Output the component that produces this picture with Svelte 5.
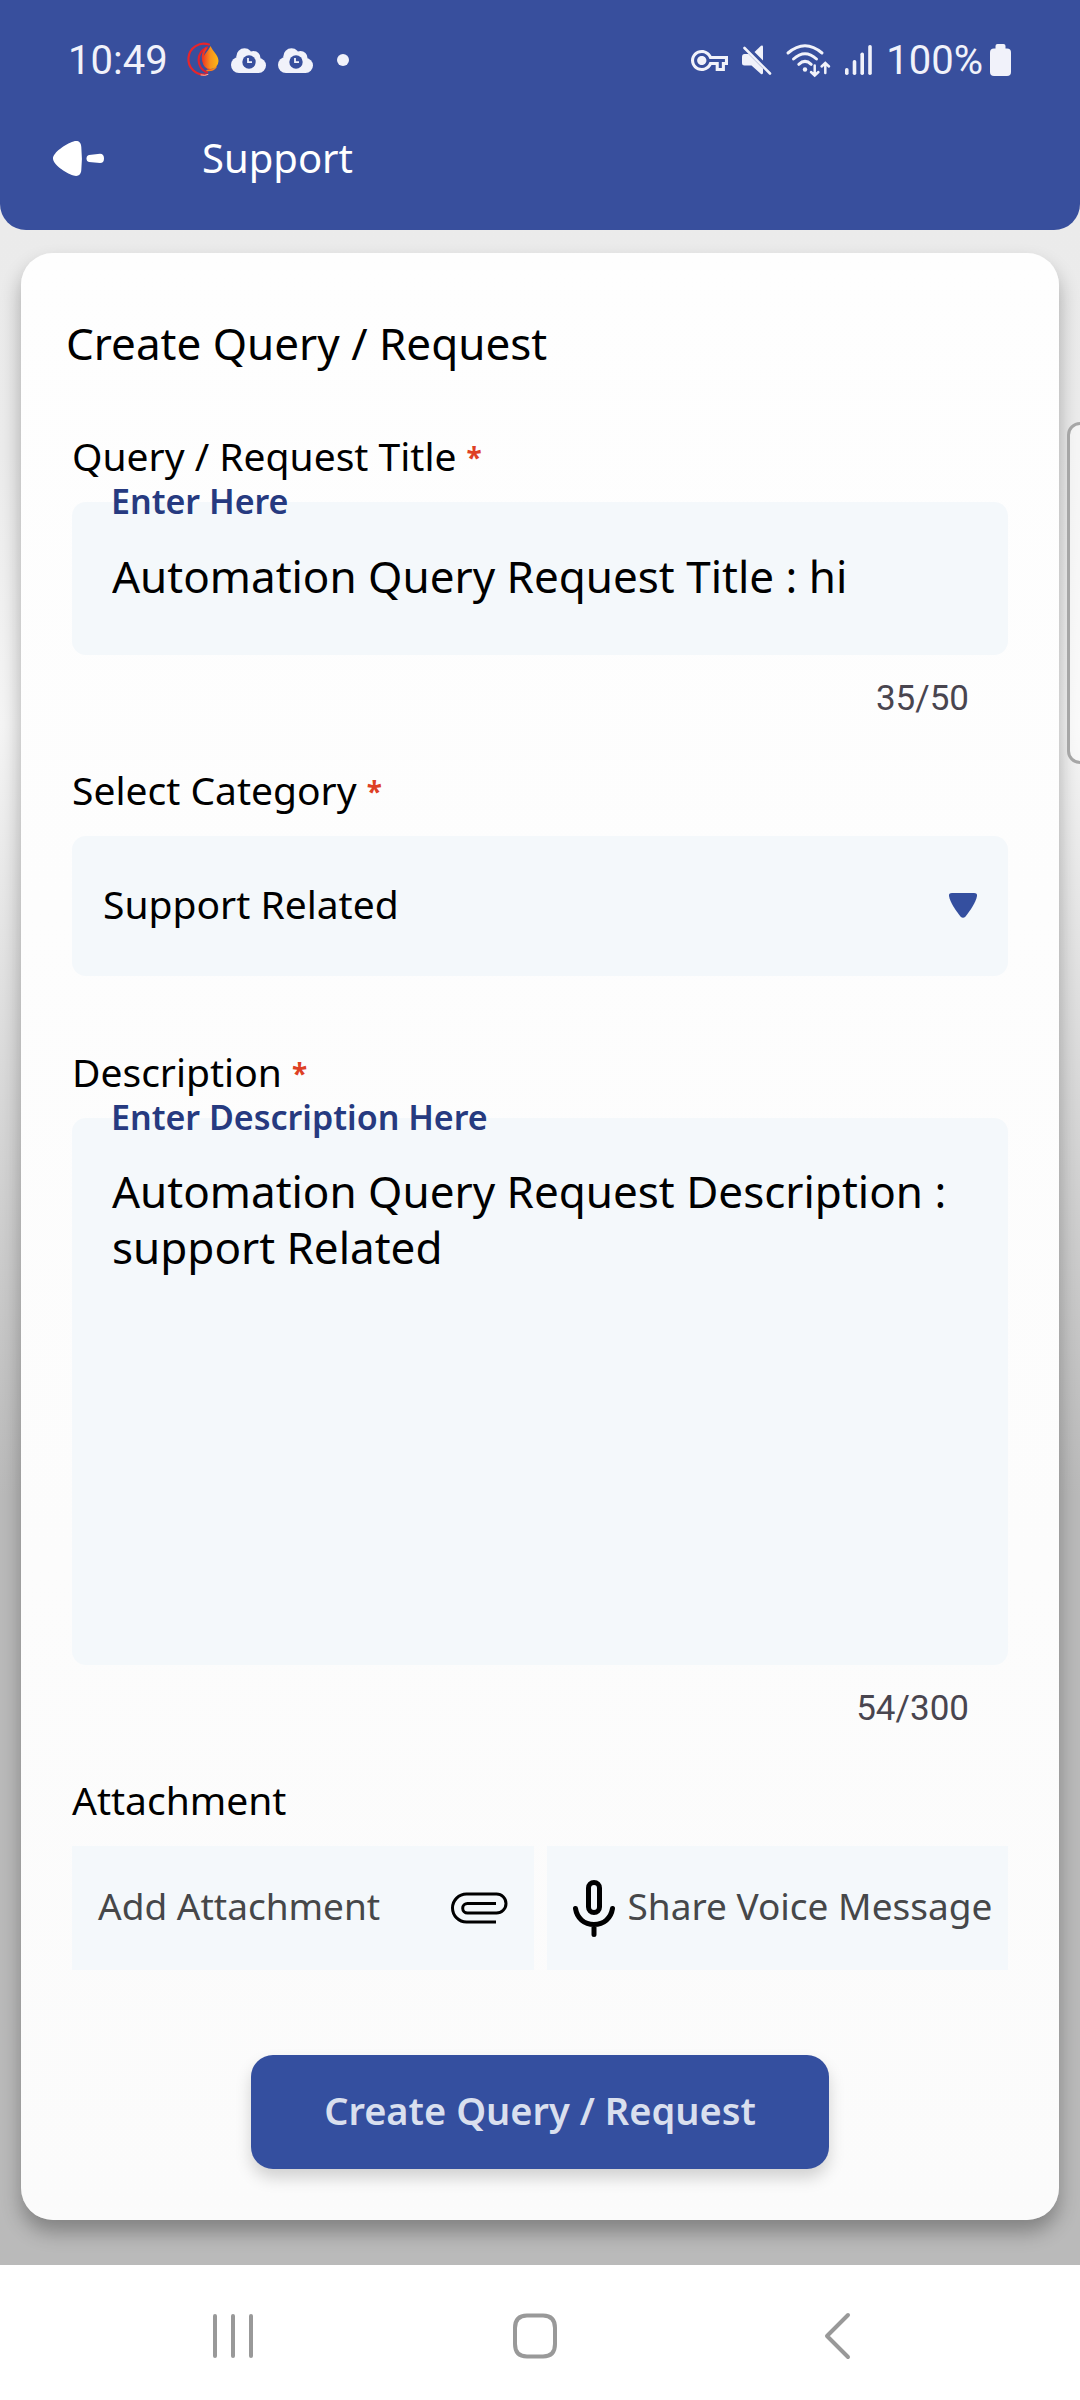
<script>
  let title = $state('Automation Query Request Title : hi');
  let category = $state('Support Related');
  let description = $state('Automation Query Request Description : support Related');
</script>

{#snippet cloud()}
  <svg class="cloud" width="35" height="25" viewBox="0 0 35 25" aria-hidden="true">
    <g fill="#f1f2fa">
      <circle cx="8" cy="17" r="8" />
      <circle cx="13.5" cy="8.5" r="8.2" />
      <circle cx="22.5" cy="10" r="7" />
      <circle cx="27.5" cy="17.5" r="7.5" />
      <rect x="8" y="13" width="20" height="12" />
    </g>
    <circle cx="18" cy="14" r="6.7" fill="#384f9d" />
    <path d="M17 10V14.2H21" fill="none" stroke="#f1f2fa" stroke-width="1.8" />
  </svg>
{/snippet}

<div class="screen">
  <div class="app">
    <header>
      <div class="status">
        <span class="clock">10:49</span>
        <svg class="logo" width="32" height="34" viewBox="0 0 32 34" aria-hidden="true">
          <defs>
            <linearGradient id="drop" x1="0" y1="0" x2="1" y2="0">
              <stop offset="0" stop-color="#ee3524" />
              <stop offset=".5" stop-color="#f7941d" />
              <stop offset="1" stop-color="#fdb813" />
            </linearGradient>
          </defs>
          <g fill="none" stroke-linecap="round">
            <path d="M22 1.5A15.500 15.500 0 1 0 19 31.500" stroke="#e8252b" stroke-width="2.200" />
            <path d="M20 4.500A13.500 13.500 0 0 0 20 29.500" stroke="#e02030" stroke-width="2.200" />
            <path d="M19 5.500A14 14 0 0 0 24 27" stroke="#ee3524" stroke-width="2.200" />
            <path d="M20 27.500Q26 28 29 24" stroke="#f58220" stroke-width="1.400" />
            <path d="M14 32Q18 33 21 31.500" stroke="#f7b9a5" stroke-width="1" />
          </g>
          <path d="M23.500 3C26 9 31.500 12 31.500 18A8 8 0 0 1 15.500 18C15.500 12 21 9 23.500 3Z" fill="url(#drop)" />
        </svg>
        {@render cloud()}
        {@render cloud()}
        <i class="dot"></i>
        <div class="indicators">
          <svg width="37" height="21" viewBox="0 5 24 14" preserveAspectRatio="none" fill="#f1f2fa" aria-hidden="true">
            <path d="M22 19h-6v-4h-2.68c-1.14 2.42-3.6 4-6.32 4-3.86 0-7-3.14-7-7s3.140-7 7-7c2.720 0 5.170 1.580 6.320 4H24v6h-2v4zm-4-2h2v-4h2v-2H11.940l-.230-.670C11.010 8.340 9.110 7 7 7c-2.760 0-5 2.240-5 5s2.240 5 5 5c2.110 0 4.010-1.340 4.710-3.330l.230-.670H18v4zM7 15c-1.650 0-3-1.350-3-3s1.350-3 3-3 3 1.350 3 3-1.350 3-3 3z" />
          </svg>
          <svg width="30" height="30" viewBox="0 0 30 30" fill="#f1f2fa" aria-hidden="true">
            <path d="M2.500 9H6.500L21 23.500V28Q20.500 30 19 29L9.500 20.500H2.500Q0 20.500 0 18V12Q0 9 2.500 9Z" />
            <path d="M12.500 7L19 .800Q21 0 21 2V15.500Z" />
            <path d="M2.500 3L28 28.500" stroke="#f1f2fa" stroke-width="2.600" stroke-linecap="round" />
          </svg>
          <svg width="45" height="33" viewBox="0 0 45 33" fill="none" stroke="#f1f2fa" stroke-width="3" stroke-linecap="round" aria-hidden="true">
            <path d="M2 9Q19-5.500 36 9M7.500 15Q19 4.500 30.500 15M12.800 20.300Q19 14.500 25.200 20.300" />
            <circle cx="19" cy="25.500" r="2.200" fill="#f1f2fa" stroke="none" />
            <path d="M28.700 21.500V31M25 28L28.700 31.500L32.400 28M39.300 29V19.500M35.600 22.500L39.300 19L43 22.500" stroke-width="2.500" />
          </svg>
          <svg width="27" height="30" viewBox="0 0 27 30" fill="#f1f2fa" aria-hidden="true">
            <rect x="0" y="23" width="3.600" height="7" rx="1.700" />
            <rect x="7.700" y="15" width="3.600" height="15" rx="1.700" />
            <rect x="15.400" y="7.500" width="3.600" height="22.500" rx="1.700" />
            <rect x="23.200" y="0" width="3.600" height="30" rx="1.700" />
          </svg>
          <span class="charge">100%</span>
          <svg width="21" height="32" viewBox="0 0 21 32" fill="#f1f2fa" aria-hidden="true">
            <rect x="5.500" y="0" width="10" height="8" rx="2" />
            <rect x="0" y="4.500" width="21" height="27.500" rx="4" />
          </svg>
        </div>
      </div>
      <div class="bar">
        <button class="back" type="button" aria-label="Back">
          <svg width="51" height="35" viewBox="0 0 51 35" fill="#fff" aria-hidden="true">
            <path d="M0 17.500C0 12 12 3 20.500.500C25-.800 28 1 28.300 6Q29.500 17.500 28.300 29C28 34 25 35.800 20.500 34.500C12 32 0 23 0 17.500Z" />
            <path d="M36 14L47 12.800Q51 13 51 17.500T47 22L36 21Q33.500 20.500 33.500 17.500T36 14Z" />
          </svg>
        </button>
        <h1>Support</h1>
      </div>
    </header>

    <form class="card" onsubmit={(e) => e.preventDefault()}>
      <h2>Create Query / Request</h2>

      <label class="name" for="title">Query / Request Title <b>*</b></label>
      <div class="field">
        <span class="float">Enter Here</span>
        <input id="title" type="text" maxlength="50" bind:value={title} />
      </div>
      <p class="count">{title.length}/50</p>

      <label class="name" for="category">Select Category <b>*</b></label>
      <div class="field">
        <select id="category" bind:value={category}>
          <option>Support Related</option>
        </select>
        <svg class="caret" width="28" height="25" viewBox="0 0 28 25" fill="#344f9f" aria-hidden="true">
          <path d="M3 0H25Q28.500 0 28 3C27 9 21 18 16.500 23.500Q14 26 11.500 23.500C7 18 1 9 0 3Q-.500 0 3 0Z" />
        </svg>
      </div>

      <label class="name spaced" for="description">Description <b>*</b></label>
      <div class="field">
        <span class="float">Enter Description Here</span>
        <textarea id="description" maxlength="300" spellcheck="false" bind:value={description}></textarea>
      </div>
      <p class="count">{description.length}/300</p>

      <p class="name">Attachment</p>
      <div class="attach">
        <button type="button">
          <span>Add Attachment</span>
          <svg class="clip" width="56" height="32" viewBox="0 0 56 32" fill="none" stroke="#000" stroke-width="3" aria-hidden="true">
            <path d="M45 30H15.500A14 14 0 0 1 15.500 2H45.500A9.500 9.500 0 0 1 45.500 21H16.500A4.800 4.800 0 0 1 16.500 11.400H45" />
          </svg>
        </button>
        <button type="button">
          <svg width="42" height="57" viewBox="0 0 42 57" fill="none" stroke="#000" stroke-width="5" stroke-linecap="round" aria-hidden="true">
            <rect x="15.500" y="2.500" width="11" height="30" rx="5.500" />
            <path d="M2.500 28.500C4 38 11 44.500 21 44.500S38 38 39.500 28.500M21 45V54.500" />
          </svg>
          <span>Share Voice Message</span>
        </button>
      </div>

      <button class="submit" type="submit">Create Query / Request</button>
    </form>

    <div class="edge"></div>
  </div>

  <nav aria-label="System navigation">
    <button type="button" aria-label="Recent apps">
      <svg width="42" height="44" viewBox="0 0 42 44" stroke="#999" stroke-width="4" stroke-linecap="round" aria-hidden="true">
        <path d="M3 2V42M21 2V42M39 2V42" />
      </svg>
    </button>
    <button type="button" aria-label="Home">
      <svg width="46" height="46" viewBox="0 0 46 46" fill="none" stroke="#999" stroke-width="4" aria-hidden="true">
        <path d="M15 2.500H31Q43 2.500 43 15V31Q43 43.500 31 43.500H15Q3 43.500 3 31V15Q3 2.500 15 2.500Z" />
      </svg>
    </button>
    <button type="button" aria-label="Back">
      <svg width="26" height="46" viewBox="0 0 26 46" fill="none" stroke="#999" stroke-width="4" stroke-linecap="round" stroke-linejoin="round" aria-hidden="true">
        <path d="M24 2L3 23L24 44" />
      </svg>
    </button>
  </nav>
</div>

<style>
  :global(body) {
    margin: 0;
    background: #fff;
  }

  .screen {
    font-family: 'Noto Sans', 'Open Sans', sans-serif;
    color: #000;
  }

  .screen :is(button, input, select, textarea) {
    box-sizing: border-box;
    margin: 0;
    border: 0;
    font-family: inherit;
    color: inherit;
    outline: none;
  }

  svg {
    display: block;
    flex: none;
    overflow: visible;
  }

  .app {
    position: relative;
    overflow: hidden;
    padding-bottom: 45px;
    background: linear-gradient(#ebebeb 10%, #ececec 20%, #f5f5f5 32%, #bababa 66%, #bababa);
  }

  header {
    padding-bottom: 34px;
    border-radius: 0 0 26px 26px;
    background: #384f9d;
  }

  .status {
    display: flex;
    align-items: center;
    height: 120px;
    padding: 0 69px 0 68px;
    color: #f1f2fa;
    font-family: Roboto, sans-serif;
    font-size: 40px;
  }

  .logo {
    margin-left: 19px;
  }

  .cloud {
    margin-left: 12px;
  }

  .dot {
    width: 12px;
    height: 12px;
    margin-left: 24px;
    border-radius: 50%;
    background: #f1f2fa;
  }

  .indicators {
    display: flex;
    align-items: center;
    gap: 14px;
    margin-left: auto;
  }

  .charge {
    margin-right: -7px;
  }

  .bar {
    display: flex;
    align-items: center;
    gap: 98px;
    height: 76px;
    padding: 0 53px;
  }

  .back {
    padding: 0;
    background: none;
  }

  h1 {
    margin: 0;
    color: #fff;
    font-size: 40px;
    line-height: 56px;
    font-weight: 400;
  }

  .card {
    display: flex;
    flex-direction: column;
    margin: 23px 21px 0;
    padding: 62px 51px 51px;
    border-radius: 32px;
    background: linear-gradient(#fefefe, #fbfbfb);
    box-shadow: 0 12px 20px rgba(0, 0, 0, 0.3);
  }

  h2 {
    margin: 0 -6px 61px;
    font-size: 44px;
    line-height: 56px;
    font-weight: 400;
  }

  .name {
    margin: 0 0 22px;
    font-size: 39px;
    line-height: 48px;
  }

  .name b {
    color: #de4024;
    font-size: 28px;
    line-height: 28px;
    vertical-align: 3px;
  }

  .spaced {
    margin-top: 72px;
  }

  .field {
    position: relative;
    border-radius: 14px;
    background: #f4f8fb;
  }

  .float {
    position: absolute;
    top: -21px;
    left: 39px;
    color: #263a80;
    font-size: 34px;
    line-height: 40px;
    font-weight: 600;
  }

  .field :is(input, select, textarea) {
    display: block;
    width: 100%;
    background: none;
    font-size: 44px;
    line-height: 56px;
  }

  .field input {
    height: 153px;
    padding: 0 40px 6px;
  }

  .field select {
    height: 140px;
    padding: 0 80px 4px 31px;
    appearance: none;
    font-size: 39px;
  }

  .field textarea {
    height: 547px;
    padding: 45px 40px;
    resize: none;
  }

  .caret {
    position: absolute;
    top: 57px;
    right: 31px;
    pointer-events: none;
  }

  .count {
    margin: 24px 39px 47px;
    color: #49454f;
    font-family: Roboto, sans-serif;
    font-size: 35px;
    line-height: 40px;
    text-align: right;
  }

  .attach {
    display: grid;
    grid-template-columns: 1fr 1fr;
    gap: 13px;
    margin-bottom: 85px;
  }

  .attach button {
    display: flex;
    align-items: center;
    gap: 13px;
    height: 124px;
    padding: 0 12px 0 26px;
    background: #f4f8fb;
    color: #464749;
    font-size: 37px;
    line-height: 48px;
    white-space: nowrap;
  }

  .attach span {
    padding-bottom: 5px;
  }

  .clip {
    margin: 0 15px 0 auto;
  }

  .submit {
    align-self: center;
    height: 114px;
    padding: 0 73px 4px;
    border-radius: 22px;
    background: #344f9f;
    box-shadow: 0 9px 16px rgba(0, 0, 0, 0.17);
    font-size: 38px;
    font-weight: 600;
  }

  .screen .submit {
    color: #d9dfee;
  }

  .edge {
    position: absolute;
    top: 422px;
    right: -3px;
    box-sizing: border-box;
    width: 16px;
    height: 342px;
    border: 3px solid #a6a6a6;
    border-radius: 13px 0 0 13px;
    background: rgba(255, 255, 255, 0.5);
  }

  nav {
    display: grid;
    grid-template-columns: repeat(3, 1fr);
    align-items: center;
    height: 135px;
    padding: 6px 92px 0 82px;
    box-sizing: border-box;
    background: #fff;
  }

  nav button {
    display: flex;
    justify-content: center;
    padding: 0;
    background: none;
  }
</style>
